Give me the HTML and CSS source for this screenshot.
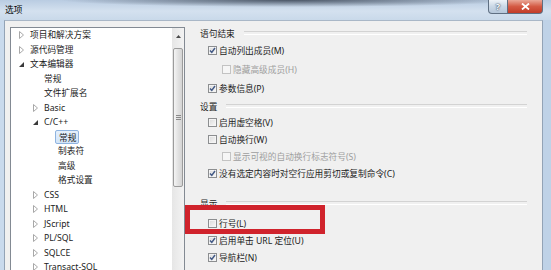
FILE: index.html
```html
<!DOCTYPE html>
<html lang="zh-CN">
<head>
<meta charset="utf-8">
<title>选项</title>
<link rel="stylesheet" href="styles.css">
</head>
<body>
<div class="window">
  <div class="titlebar">
    <span class="title">选项</span>
    <div class="caption-buttons">
      <span class="cbtn help">?</span>
      <span class="cbtn close"><svg width="9" height="7" viewBox="0 0 9 7"><path d="M1 0.5 L8 6.5 M8 0.5 L1 6.5" stroke="#fff" stroke-width="1.8" fill="none"/></svg></span>
    </div>
  </div>
  <div class="client">
    <div class="client-inner">
      <div class="tree">
        <ul class="tree-list">
          <li class="node l0"><span class="tw"><svg width="5" height="8" viewBox="0 0 5 8"><path d="M.5 .5 L4.5 4 L.5 7.5Z" fill="#fff" stroke="#a8a8a8"/></svg></span><span class="label">项目和解决方案</span></li>
          <li class="node l0"><span class="tw"><svg width="5" height="8" viewBox="0 0 5 8"><path d="M.5 .5 L4.5 4 L.5 7.5Z" fill="#fff" stroke="#a8a8a8"/></svg></span><span class="label">源代码管理</span></li>
          <li class="node l0"><span class="tw"><svg width="5" height="5" viewBox="0 0 5 5"><path d="M5 0 V5 H0Z" fill="#3a3a3a"/></svg></span><span class="label">文本编辑器</span></li>
          <li class="node l1"><span class="tw"></span><span class="label">常规</span></li>
          <li class="node l1"><span class="tw"></span><span class="label">文件扩展名</span></li>
          <li class="node l1"><span class="tw"><svg width="5" height="8" viewBox="0 0 5 8"><path d="M.5 .5 L4.5 4 L.5 7.5Z" fill="#fff" stroke="#a8a8a8"/></svg></span><span class="label">Basic</span></li>
          <li class="node l1"><span class="tw"><svg width="5" height="5" viewBox="0 0 5 5"><path d="M5 0 V5 H0Z" fill="#3a3a3a"/></svg></span><span class="label">C/C++</span></li>
          <li class="node l2"><span class="tw"></span><span class="label selected">常规</span></li>
          <li class="node l2"><span class="tw"></span><span class="label">制表符</span></li>
          <li class="node l2"><span class="tw"></span><span class="label">高级</span></li>
          <li class="node l2"><span class="tw"></span><span class="label">格式设置</span></li>
          <li class="node l1"><span class="tw"><svg width="5" height="8" viewBox="0 0 5 8"><path d="M.5 .5 L4.5 4 L.5 7.5Z" fill="#fff" stroke="#a8a8a8"/></svg></span><span class="label">CSS</span></li>
          <li class="node l1"><span class="tw"><svg width="5" height="8" viewBox="0 0 5 8"><path d="M.5 .5 L4.5 4 L.5 7.5Z" fill="#fff" stroke="#a8a8a8"/></svg></span><span class="label">HTML</span></li>
          <li class="node l1"><span class="tw"><svg width="5" height="8" viewBox="0 0 5 8"><path d="M.5 .5 L4.5 4 L.5 7.5Z" fill="#fff" stroke="#a8a8a8"/></svg></span><span class="label">JScript</span></li>
          <li class="node l1"><span class="tw"><svg width="5" height="8" viewBox="0 0 5 8"><path d="M.5 .5 L4.5 4 L.5 7.5Z" fill="#fff" stroke="#a8a8a8"/></svg></span><span class="label">PL/SQL</span></li>
          <li class="node l1"><span class="tw"><svg width="5" height="8" viewBox="0 0 5 8"><path d="M.5 .5 L4.5 4 L.5 7.5Z" fill="#fff" stroke="#a8a8a8"/></svg></span><span class="label">SQLCE</span></li>
          <li class="node l1"><span class="tw"><svg width="5" height="8" viewBox="0 0 5 8"><path d="M.5 .5 L4.5 4 L.5 7.5Z" fill="#fff" stroke="#a8a8a8"/></svg></span><span class="label">Transact-SQL</span></li>
        </ul>
        <div class="vscroll">
          <div class="sb-up"><svg width="5" height="3" viewBox="0 0 5 3"><path d="M0 3 L2.5 0 L5 3Z" fill="#4a4a4a"/></svg></div>
          <div class="sb-thumb"><span class="grip"></span></div>
        </div>
      </div>

      <div class="options">
        <div class="group g1">
          <div class="grp-h"><span>语句结束</span></div>
          <div class="opt tall"><span class="cb"><svg width="7" height="7" viewBox="0 0 7 7"><path d="M1 3.4 L2.8 5.4 L6 1" stroke="#435a86" stroke-width="1.5" fill="none"/></svg></span><span>自动列出成员(M)</span></div>
          <div class="opt tall sub dis"><span class="cb"></span><span>隐藏高级成员(H)</span></div>
          <div class="opt tall"><span class="cb"><svg width="7" height="7" viewBox="0 0 7 7"><path d="M1 3.4 L2.8 5.4 L6 1" stroke="#435a86" stroke-width="1.5" fill="none"/></svg></span><span>参数信息(P)</span></div>
        </div>
        <div class="group g2">
          <div class="grp-h"><span>设置</span></div>
          <div class="opt"><span class="cb"></span><span>启用虚空格(V)</span></div>
          <div class="opt"><span class="cb"></span><span>自动换行(W)</span></div>
          <div class="opt sub dis"><span class="cb"></span><span>显示可视的自动换行标志符号(S)</span></div>
          <div class="opt"><span class="cb"><svg width="7" height="7" viewBox="0 0 7 7"><path d="M1 3.4 L2.8 5.4 L6 1" stroke="#435a86" stroke-width="1.5" fill="none"/></svg></span><span>没有选定内容时对空行应用剪切或复制命令(C)</span></div>
        </div>
        <div class="group g3">
          <div class="grp-h"><span>显示</span></div>
          <div class="opt"><span class="cb"></span><span>行号(L)</span></div>
          <div class="opt"><span class="cb"><svg width="7" height="7" viewBox="0 0 7 7"><path d="M1 3.4 L2.8 5.4 L6 1" stroke="#435a86" stroke-width="1.5" fill="none"/></svg></span><span>启用单击 URL 定位(U)</span></div>
          <div class="opt"><span class="cb"><svg width="7" height="7" viewBox="0 0 7 7"><path d="M1 3.4 L2.8 5.4 L6 1" stroke="#435a86" stroke-width="1.5" fill="none"/></svg></span><span>导航栏(N)</span></div>
        </div>
      </div>
    </div>
  </div>
  <div class="annotation"></div>
</div>
</body>
</html>
```

FILE: styles.css
```css
* { box-sizing: border-box; margin: 0; padding: 0; }
html, body { width: 551px; height: 270px; overflow: hidden; }
body {
  font-family: "Noto Sans", "Noto Sans CJK SC", sans-serif;
  font-size: 8.7px;
  color: #1c1c1c;
  background: #c8d9ec;
}

.window {
  position: relative;
  width: 551px;
  height: 270px;
  display: flex;
  flex-direction: column;
}

/* title bar */
.titlebar {
  flex: none;
  height: 20px;
  display: flex;
  justify-content: space-between;
  align-items: flex-start;
  padding-left: 5px;
  background:
    radial-gradient(ellipse 230px 7px at 290px 0, rgba(55,65,80,.85), rgba(55,65,80,0)),
    linear-gradient(#b9cce2, #d4e1ef 55%, #c9d9ea);
}
.title { line-height: 20px; color: #000; }
.caption-buttons { display: flex; margin-right: 8px; }
.cbtn {
  height: 14px;
  display: flex;
  align-items: center;
  justify-content: center;
  border: 1px solid #5f6f82;
  border-top: none;
}
.help {
  width: 20px;
  border-radius: 0 0 0 4px;
  background: linear-gradient(#eef3f8, #cad8e6 50%, #b6c7da);
  color: #fff;
  font-weight: bold;
  font-size: 9px;
  text-shadow: 0 0 2px #2e405a, 0 0 1px #2e405a;
}
.close {
  width: 35px;
  border-left: none;
  border-radius: 0 0 4px 0;
  background: linear-gradient(#eaa898, #d45a44 50%, #c23b28);
}

/* client */
.client {
  flex: 1;
  display: flex;
  border-left: 4px solid #c9daed;
  border-right: 8px solid #bfd2e7;
  min-height: 0;
}
.client-inner {
  flex: 1;
  display: flex;
  align-items: flex-start;
  background: #f0f0f0;
  border-left: 1px solid #93a3b6;
  border-right: 1px solid #93a3b6;
  border-top: 1px solid #a9b7c7;
  min-height: 0;
  overflow: hidden;
}

/* tree */
.tree {
  flex: none;
  width: 175px;
  height: 260px;
  margin: 6px 0 0 5px;
  border: 1px solid #838a93;
  background: #fff;
  display: flex;
}
.tree-list { flex: 1; list-style: none; }
.node {
  height: 14.5px;
  display: flex;
  align-items: center;
  white-space: nowrap;
}
.node.l0 { padding-left: 8px; }
.node.l1 { padding-left: 22px; }
.node.l2 { padding-left: 36px; }
.tw {
  flex: none;
  width: 11px;
  display: flex;
  align-items: center;
}
.label { line-height: 12px; }
.label.selected {
  margin-left: -3px;
  padding: 1px 2px 0 3px;
  height: 14px;
  line-height: 12px;
  background: linear-gradient(#e5f0fb, #d3e5f9);
  border: 1px solid #8fb4e0;
  border-radius: 2px;
}

.vscroll {
  flex: none;
  width: 12px;
  align-self: stretch;
  background: linear-gradient(to right, #e6e6e6, #f3f3f3);
  display: flex;
  flex-direction: column;
  align-items: center;
}
.sb-up {
  width: 12px;
  height: 17px;
  display: flex;
  align-items: center;
  justify-content: center;
}
.sb-thumb {
  margin-top: 3px;
  width: 10px;
  height: 139px;
  border: 1px solid #9b9b9b;
  border-radius: 2px;
  background: linear-gradient(to right, #f4f4f4, #e2e2e2 50%, #d4d4d4);
  display: flex;
  align-items: center;
  justify-content: center;
}
.grip {
  width: 5px;
  height: 5px;
  background: repeating-linear-gradient(#8a8a8a 0 1px, transparent 1px 2px);
}

/* options */
.options {
  flex: 1;
  padding: 4.5px 15px 0 15px;
}
.group.g2 { margin-top: 1px; }
.group.g3 { margin-top: 14px; }
.grp-h {
  height: 15px;
  display: flex;
  align-items: center;
  gap: 9px;
  color: #1e1e1e;
  white-space: nowrap;
}
.grp-h::after {
  content: "";
  flex: 1;
  height: 2px;
  border-top: 1px solid #d3d3d3;
  border-bottom: 1px solid #ffffff;
}
.g3 .grp-h { margin-bottom: 4px; }
.opt {
  height: 17px;
  display: flex;
  align-items: center;
  padding-left: 8px;
  white-space: nowrap;
}
.opt.tall { height: 19px; }
.opt.sub { padding-left: 22px; }
.opt.dis { color: #9e9e9e; }
.cb {
  flex: none;
  width: 9px;
  height: 9px;
  margin-right: 2px;
  border: 1px solid #8c8e90;
  background: linear-gradient(135deg, #d9d9d9, #f9f9f9);
  box-shadow: inset 0 0 0 1px #f4f4f4;
  display: flex;
  align-items: center;
  justify-content: center;
}
.opt.dis .cb {
  border-color: #c3c3c3;
  background: #f6f6f6;
  box-shadow: none;
}

/* red annotation frame drawn over the screenshot */
.annotation {
  position: absolute;
  left: 185px;
  top: 205px;
  width: 140px;
  height: 29px;
  border: 5px solid #d0232c;
}
```
